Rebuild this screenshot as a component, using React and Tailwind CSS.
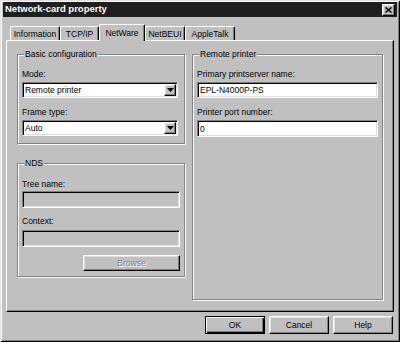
import React from 'react';

const sunken =
  'border border-t-[#808080] border-l-[#808080] border-b-white border-r-white shadow-[inset_1px_1px_0_#000,inset_-1px_-1px_0_#dfdfdf]';
const raised =
  'border border-t-white border-l-white border-b-black border-r-black shadow-[inset_-1px_-1px_0_#808080,inset_1px_1px_0_#dfdfdf]';

const Group = ({ title, className = '', children }) => (
  <div className={`relative border border-[#808080] shadow-[inset_1px_1px_0_#fff,1px_1px_0_#fff] ${className}`}>
    <span className="absolute left-[6px] top-[-6px] bg-[#c0c0c0] px-[1px] leading-[10px]">{title}</span>
    {children}
  </div>
);

const Label = ({ children, className = '' }) => (
  <div className={`h-[10px] leading-[10px] ${className}`}>{children}</div>
);

const Select = ({ value }) => (
  <div className={`flex h-[16px] items-center bg-white ${sunken}`}>
    <span className="flex-1 pl-[2px] leading-[10px]">{value}</span>
    <span className={`mr-[1px] flex h-[12px] w-[12px] items-center justify-center bg-[#c0c0c0] ${raised}`}>
      <svg width="7" height="4" viewBox="0 0 7 4">
        <path d="M0 0h7L3.5 4z" fill="#000" />
      </svg>
    </span>
  </div>
);

const Input = ({ value, disabled, className = '' }) => (
  <div className={`flex items-center ${disabled ? 'bg-[#c0c0c0]' : 'bg-white'} ${sunken} ${className}`}>
    <span className="pl-[2px] leading-[10px]">{value}</span>
  </div>
);

const Tab = ({ label, active, w }) => (
  <div
    className={`relative flex items-center justify-center rounded-t-[2px] border-l border-t border-r border-l-white border-t-white border-r-black shadow-[inset_-1px_0_0_#808080] bg-[#c0c0c0] ${w} ${
      active ? 'z-10 mb-[-1px] h-[17px]' : 'h-[14px]'
    }`}
  >
    <span className="leading-[10px]">{label}</span>
  </div>
);

const Button = ({ children, def, disabled }) => (
  <div
    className={`flex h-[18px] w-[60px] items-center justify-center bg-[#c0c0c0] ${
      def
        ? 'border border-black shadow-[inset_1px_1px_0_#fff,inset_-1px_-1px_0_#000,inset_-2px_-2px_0_#808080]'
        : raised
    }`}
  >
    <span className={disabled ? 'text-[#808080] [text-shadow:1px_1px_0_#fff]' : ''}>{children}</span>
  </div>
);

export default function App() {
  return (
    <div className="h-[342px] w-[400px] bg-[#c0c0c0] px-[3px] pt-[2px] font-['Liberation_Sans',Arial,sans-serif] text-[8.5px] text-black shadow-[inset_1px_1px_0_#dfdfdf,inset_-1px_-1px_0_#000,inset_2px_2px_0_#fff,inset_-2px_-2px_0_#808080]">
      {/* title bar */}
      <div className="flex h-[15px] items-center justify-between bg-[#1f1f1f] pl-[2px] pr-[2px]">
        <span className="text-[9.5px] font-bold text-white">Network-card property</span>
        <div className={`flex h-[12px] w-[13px] items-center justify-center bg-[#c0c0c0] ${raised}`}>
          <svg width="7" height="6" viewBox="0 0 7 6">
            <path d="M0.5 0.5l6 5M6.5 0.5l-6 5" stroke="#000" strokeWidth="1.5" />
          </svg>
        </div>
      </div>

      {/* tabs */}
      <div className="mt-[6px] flex h-[17px] items-end pl-[7px]">
        <Tab label="Information" w="w-[50px]" />
        <Tab label="TCP/IP" w="w-[39px]" />
        <Tab label="NetWare" w="w-[46px]" active />
        <Tab label="NetBEUI" w="w-[40px]" />
        <Tab label="AppleTalk" w="w-[50px]" />
      </div>

      {/* tab panel */}
      <div className="ml-[3px] flex h-[272px] w-[388px] gap-[7px] border border-t-white border-l-white border-b-black border-r-black pl-[10px] pt-[13px] shadow-[inset_-1px_-1px_0_#808080]">
        <div className="flex w-[168px] flex-col gap-[19px]">
          <Group title="Basic configuration" className="flex flex-col px-[4px] pb-[7px] pt-[14px]">
            <Label>Mode:</Label>
            <div className="mt-[3px] pr-[2px]">
              <Select value="Remote printer" />
            </div>
            <Label className="mt-[9px]">Frame type:</Label>
            <div className="mt-[3px] pr-[2px]">
              <Select value="Auto" />
            </div>
          </Group>

          <Group title="NDS" className="flex flex-col px-[4px] pb-[5px] pt-[15px]">
            <Label>Tree name:</Label>
            <Input disabled className="mt-[2px] h-[17px]" />
            <Label className="mt-[8px]">Context:</Label>
            <Input disabled className="mt-[4px] h-[17px]" />
            <div className="mt-[8px] flex justify-end">
              <div className={`flex h-[16px] w-[97px] items-center justify-center bg-[#c0c0c0] ${raised}`}>
                <span className="text-[#808080] [text-shadow:1px_1px_0_#fff]">Browse</span>
              </div>
            </div>
          </Group>
        </div>

        <Group title="Remote printer" className="flex h-[246px] w-[191px] flex-col px-[4px] pt-[14px]">
          <Label>Primary printserver name:</Label>
          <Input value="EPL-N4000P-PS" className="mt-[3px] h-[16px]" />
          <Label className="mt-[9px]">Printer port number:</Label>
          <Input value="0" className="mt-[3px] h-[17px]" />
        </Group>
      </div>

      {/* buttons */}
      <div className="mt-[4px] flex justify-end gap-[4px] pr-[4px]">
        <Button def>OK</Button>
        <Button>Cancel</Button>
        <Button>Help</Button>
      </div>
    </div>
  );
}
